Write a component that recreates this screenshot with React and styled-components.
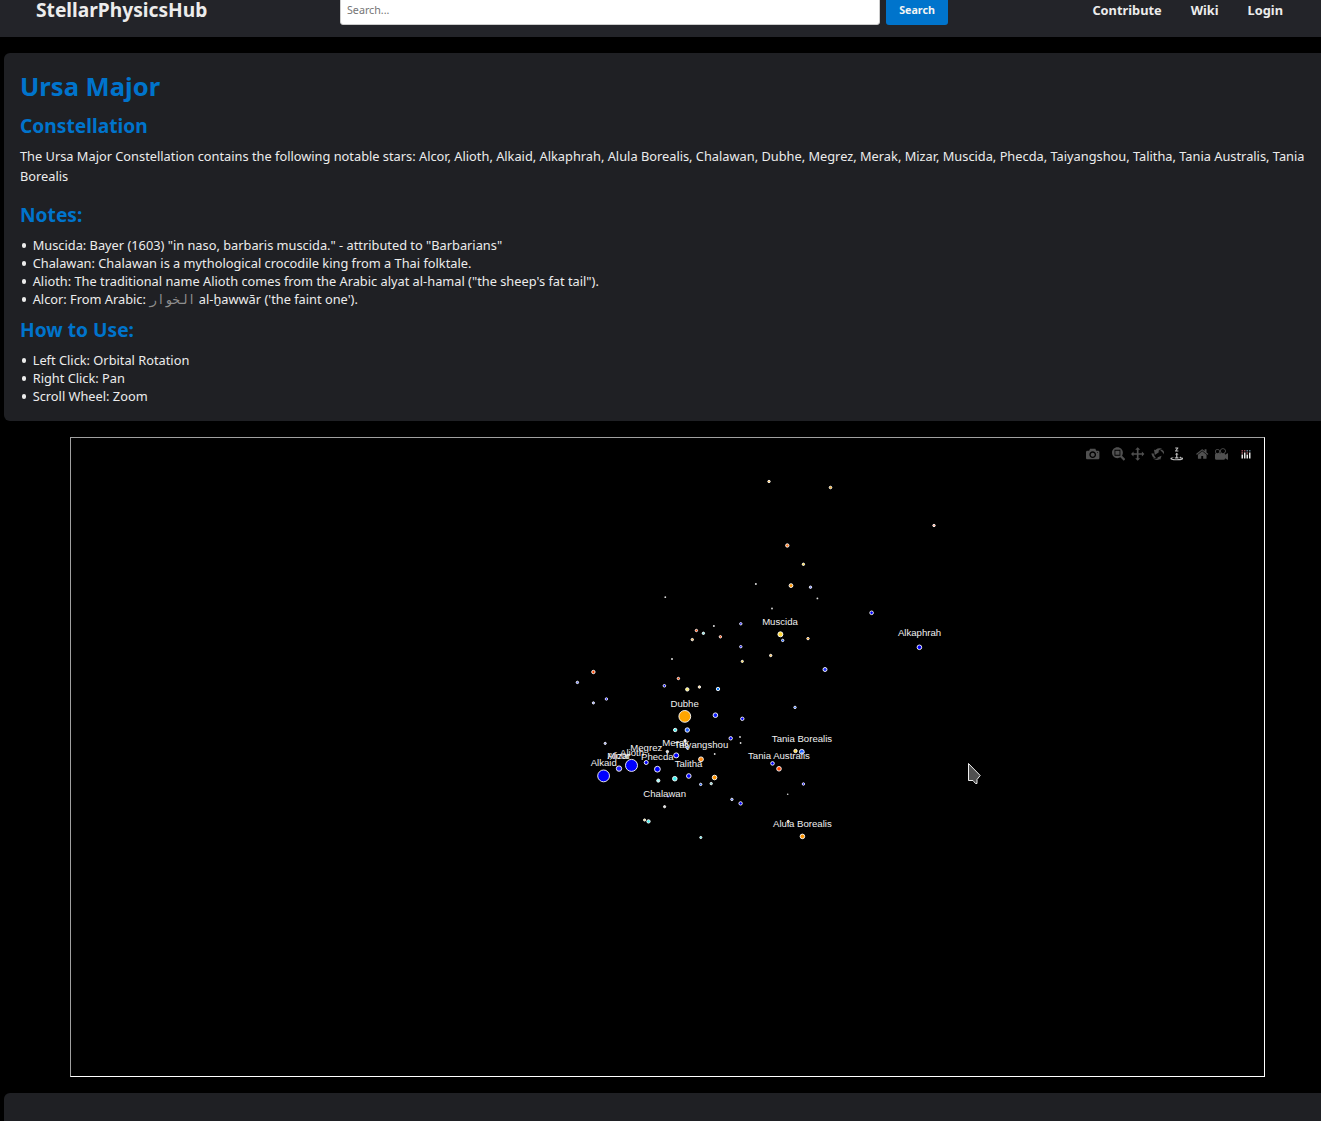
import React from "react";
import styled, { createGlobalStyle } from "styled-components";

const GlobalStyle = createGlobalStyle`
  * { box-sizing: border-box; }
  html, body { margin: 0; background: #000; }
  body {
    height: 1121px;
    overflow: hidden;
    color: #ececec;
    font-family: "Noto Sans", sans-serif;
    font-size: 12.8px;
  }
`;

const Page = styled.div`
  height: 1121px;
  overflow: hidden;
`;

const Header = styled.header`
  display: grid;
  grid-template-columns: 304px 608px 1fr;
  align-items: center;
  height: 54px;
  margin-top: -17px;
  padding: 0 38px 0 36px;
  background: #232429;
`;

const Brand = styled.div`
  font-size: 19.2px;
  font-weight: 700;
  line-height: 20px;
`;

const SearchForm = styled.form`
  display: flex;
  gap: 6px;
  margin: 0;
`;

const SearchInput = styled.input`
  width: 540px;
  height: 30px;
  padding: 0 6px;
  border: 1px solid #ccc;
  border-radius: 3px;
  background: #fff;
  font: 10.7px "Noto Sans", sans-serif;
  &::placeholder { color: #757575; }
`;

const SearchButton = styled.button`
  width: 62px;
  height: 30px;
  padding: 0;
  border: 0;
  border-radius: 3px;
  background: #0074cc;
  color: #f4f4f4;
  font: 700 10.7px "Noto Sans", sans-serif;
`;

const Nav = styled.nav`
  display: flex;
  justify-content: flex-end;
  gap: 29px;
  font-weight: 700;
`;

const Panel = styled.section`
  height: ${(p) => p.$height}px;
  margin: 16px 0 0 4px;
  padding: 16px 16px 0;
  border-radius: 6px 0 0 ${(p) => (p.$open ? 0 : 6)}px;
  background: #1f2024;
`;

const Title = styled.h1`
  margin: 0;
  color: #0074cc;
  font-size: 25.6px;
  line-height: 36px;
`;

const Heading = styled.h2`
  margin: ${(p) => p.$top}px 0 0;
  color: #0074cc;
  font-size: 19.2px;
  line-height: 26px;
`;

const Summary = styled.p`
  margin: 7px 0 0;
  line-height: 20px;
`;

const BulletList = styled.ul`
  margin: 8px 0 0;
  padding: 0;
  list-style: none;
  line-height: 18px;
`;

const Bullet = styled.li`
  display: flex;
  align-items: center;
  white-space: pre;
  height: 18px;
  &::before {
    content: "";
    width: 4.6px;
    height: 4.6px;
    margin: 1.4px 6.4px 0 1.7px;
    border-radius: 50%;
    background: #ececec;
  }
`;

const Arabic = styled.span`
  font-family: "DejaVu Sans Mono", monospace;
  font-size: 12.8px;
  line-height: 1;
  color: #8f8f8f;
`;

const Plot = styled.main`
  position: relative;
  width: 1195px;
  height: 640px;
  margin: 16px 0 0 70px;
  border: 1px solid #fff;
  border-top-color: #a0a0a0;
  border-left-color: #a0a0a0;
`;

const StarMap = styled.svg`
  display: block;
  width: 1193px;
  height: 638px;
`;

const StarLabel = styled.text`
  fill: #f0f0f0;
  font-family: "Liberation Sans", Arial, sans-serif;
  font-size: 9.6px;
  text-anchor: middle;
`;

const ModeBar = styled.div`
  position: absolute;
  top: 9px;
  right: 13.5px;
  display: flex;
`;

const IconGroup = styled.div`
  display: flex;
  gap: 6px;
  margin-left: 12.2px;
`;

const Icon = styled.svg`
  display: block;
  width: ${(p) => p.$width || 13.4}px;
  height: 14px;
  fill: ${(p) => (p.$active ? "#bfbfbf" : "#505050")};
`;

const Pointer = styled.svg`
  position: absolute;
  left: 896px;
  top: 324px;
  width: 16px;
  height: 23px;
`;

const icons = {
  camera: "m500 450c-83 0-150-67-150-150 0-83 67-150 150-150 83 0 150 67 150 150 0 83-67 150-150 150z m400 150h-120c-16 0-34 13-39 29l-31 93c-6 15-23 28-40 28h-340c-16 0-34-13-39-28l-31-94c-6-15-23-28-40-28h-120c-55 0-100-45-100-100v-450c0-55 45-100 100-100h800c55 0 100 45 100 100v450c0 55-45 100-100 100z m-400-550c-138 0-250 112-250 250 0 138 112 250 250 250 138 0 250-112 250-250 0-138-112-250-250-250z m365 380c-19 0-35 16-35 35 0 19 16 35 35 35 19 0 35-16 35-35 0-19-16-35-35-35z",
  zoom: "m1000-25l-250 251c40 63 63 138 63 218 0 224-182 406-407 406-224 0-406-182-406-406s183-406 407-406c80 0 155 22 218 62l250-250 125 125z m-812 250l0 438 437 0 0-438-437 0z m62 375l313 0 0-312-313 0 0 312z",
  pan: "m1000 350l-187 188 0-125-250 0 0 250 125 0-188 187-187-187 125 0 0-250-250 0 0 125-188-188 186-187 0 125 252 0 0-250-125 0 187-188 188 188-125 0 0 250 250 0 0-126 187 188z",
  orbit: "m922 660c-5 4-9 7-14 11-359 263-580-31-580-31l-102 28 58-400c0 1 1 1 2 2 118 108 351 249 351 249s-62 27-100 42c88 83 222 183 347 122 16-8 30-17 44-27-2 1-4 2-6 4z m36-329c0 0 64 229-88 296-62 27-124 14-175-11 157-78 225-208 249-266 8-19 11-31 11-31 2 5 6 15 11 32-5-13-8-20-8-20z m-775-239c70-31 117-50 198-32-121 80-199 346-199 346l-96-15-58-12c0 0 55-226 155-287z m603 133l-317-139c0 0 4-4 19-14 7-5 24-15 24-15s-177-147-389 4c235-287 536-112 536-112l31-22 100 299-4-1z m-298-153c6-4 14-9 24-15 0 0-17 10-24 15z",
  turntable: "m833 5l-17 108v41l-130-65 130-66c0 0 0 38 0 39 0-1 36-14 39-25 4-15-6-22-16-30-15-12-39-16-56-20-90-22-187-23-279-23-261 0-341 34-353 59 3 60 228 110 228 110-140-8-351-35-351-116 0-120 293-142 474-142 155 0 477 22 477 142 0 50-74 79-163 96z m-374 94c-58-5-99-21-99-40 0-24 65-43 144-43 79 0 143 19 143 43 0 19-42 34-98 40v216h87l-132 135-133-135h88v-216z m167 515h-136v1c16 16 31 34 46 52l84 109v54h-230v-71h124v-1c-16-17-28-32-44-51l-89-114v-51h245v72z",
  home: "m786 296v-267q0-15-11-26t-25-10h-214v214h-143v-214h-214q-15 0-25 10t-11 26v267q0 1 0 2t0 2l321 264 321-264q1-1 1-4z m124 39l-34-41q-5-5-12-6h-2q-7 0-12 3l-386 322-386-322q-7-4-13-4-7 2-12 7l-35 41q-4 5-3 13t6 12l401 334q18 15 42 15t43-15l136-114v109q0 8 5 13t13 5h107q8 0 13-5t5-13v-227l122-102q5-5 6-12t-4-13z",
  movie: "m938 413l-188-125c0 37-17 71-44 94 64 38 107 107 107 187 0 121-98 219-219 219-121 0-219-98-219-219 0-61 25-117 66-156h-115c30 33 49 76 49 125 0 103-84 187-187 187s-188-84-188-187c0-57 26-107 65-141-38-22-65-62-65-109v-250c0-70 56-126 125-126h500c69 0 125 56 125 126l188-126c34 0 62 28 62 63v375c0 35-28 63-62 63z m-750 0c-69 0-125 56-125 125s56 125 125 125 125-56 125-125-56-125-125-125z m406-1c-87 0-157 70-157 157 0 86 70 156 157 156s156-70 156-156-70-157-156-157z",
};

const B = "#0000ff", O = "#ff9500", R = "#ff4500", Y = "#ffd633", C = "#40f0f0", D = "#1e5cff", W = "#dddddd";

// x, y, radius, colour
const stars = [
  [769, 481.5, 1.5, "#ffc050"], [830.5, 487.5, 1.6, "#ffb020"], [934, 525.5, 1.5, "#ff9980"],
  [787.3, 545.5, 2, "#ff7a20"], [803.4, 564.3, 1.5, Y], [755.9, 584, 1, W], [791, 585.6, 2.2, O],
  [810.5, 587.2, 1.5, "#7080ff"], [817.4, 598.4, 0.9, W], [772, 608.5, 0.9, W], [871.6, 612.8, 2.1, B],
  [780.4, 634.3, 2.8, Y], [782.7, 640.4, 1.5, D], [808, 638.6, 1.5, O], [770.7, 655.5, 1.5, "#ffc050"],
  [825, 669.5, 2.3, "#2030ff"], [919.4, 647.3, 2.6, B], [665.3, 597.2, 0.9, W],
  [740.8, 623.8, 1.5, B], [740.8, 646.7, 1.5, B], [742.3, 661.4, 1.4, Y], [713.9, 625.9, 1, W],
  [696.4, 630.5, 1.5, R], [703.4, 633.3, 1.5, "#80e0e0"], [720.4, 636.8, 1.5, R], [692.3, 639.6, 1.5, "#ffb850"],
  [672, 659, 1, W], [593.4, 672, 2, R], [577.4, 682.4, 1.5, "#7080ff"], [606.4, 699, 1.5, B], [593.4, 702.9, 1.4, "#8090ff"],
  [678.4, 678.5, 1.5, R], [664.4, 685.8, 1.6, B], [687.3, 689.4, 2, "#fff066"], [699.4, 687, 1.5, "#ffd080"],
  [718, 689, 2, "#1080ff"], [684.8, 716.4, 6.2, "#ffa500"], [675.2, 730, 2, C], [687.3, 730, 2.5, D],
  [715.4, 715.2, 2.6, "#1020ff"], [742.3, 718.8, 2, B], [795, 707.4, 1.5, D], [605.2, 743.4, 1.4, "#90a0ff"],
  [730.7, 738.3, 2, B], [740, 737, 0.9, W], [740.6, 743, 0.9, W], [667.4, 751.6, 1.5, W],
  [685, 741, 1.5, W], [687, 747.5, 1.4, D], [676.2, 755.4, 2.8, B], [714.7, 754, 0.9, W],
  [603.6, 775.9, 6.2, B], [631.5, 765.4, 6.3, B], [619, 768.6, 3, "#2020ff"], [646.2, 762.5, 2.3, B],
  [657.4, 769.2, 3.2, B], [658.3, 780.6, 1.9, "#99ffff"], [674.8, 778.7, 2.6, C], [688.8, 776, 2.6, B],
  [701, 759.3, 2.7, "#ff8a10"], [700.7, 784.4, 1.5, D], [711.2, 783.6, 1.5, "#80d0d0"], [714.6, 777.5, 2.6, O],
  [668, 796.5, 1, "#8888ff"], [664.6, 806.7, 1.4, W], [644.6, 820, 1.4, "#ffe680"], [648.5, 821.4, 2, C],
  [700.8, 837.5, 1.4, C], [731.9, 799.4, 1.5, "#5070ff"], [740.6, 803.4, 2, B], [795.5, 751, 2, Y],
  [801.8, 751.8, 2.7, D], [772.5, 763.4, 2.1, B], [779, 768.8, 2.6, R], [803.4, 784, 1.5, B],
  [787.7, 794.2, 0.8, W], [788.2, 821.5, 1.4, O], [802.4, 836.4, 2.6, O],
];

const labels = [
  ["Muscida", 780, 624.7], ["Alkaphrah", 919.5, 635.7], ["Dubhe", 684.6, 706.7], ["Tania Borealis", 802, 742],
  ["Tania Australis", 779, 759], ["Alula Borealis", 802.4, 826.8], ["Chalawan", 664.7, 797],
  ["Alkaid", 603.7, 766], ["Mizar", 619, 759], ["Alcor", 618.5, 759], ["Alioth", 632, 756],
  ["Megrez", 646.3, 751], ["Phecda", 657.3, 759.8], ["Merak", 675.7, 745.8], ["Taiyangshou", 701.3, 747.7],
  ["Talitha", 688.6, 766.7],
];

const notes = [
  'Muscida: Bayer (1603) "in naso, barbaris muscida." - attributed to "Barbarians"',
  "Chalawan: Chalawan is a mythological crocodile king from a Thai folktale.",
  'Alioth: The traditional name Alioth comes from the Arabic alyat al-hamal ("the sheep\'s fat tail").',
];

const ModeIcon = ({ name, active }) => (
  <Icon viewBox="0 0 1000 1000" $active={active} aria-label={name}>
    <path transform="matrix(1 0 0 -1 0 850)" d={icons[name]} />
  </Icon>
);

const PlotlyMark = () => (
  <Icon viewBox="0 0 10 14" $width={10} aria-label="plotly">
    {[0.5, 3, 5.5, 8].map((x, i) => (
      <g key={x}>
        <rect x={x} y={i % 2 ? 5.5 : 7.5} width="1.5" height={i % 2 ? 6 : 4} fill="#e8e8e8" />
        <rect x={x} y="3" width="1.5" height="1.5" fill={i < 2 ? "#8a4550" : "#5d7888"} />
        {i % 2 === 0 && <rect x={x} y="5.2" width="1.5" height="1.5" fill="#9b5960" />}
      </g>
    ))}
  </Icon>
);

export default function App() {
  return (
    <Page>
      <GlobalStyle />
      <Header>
        <Brand>StellarPhysicsHub</Brand>
        <SearchForm>
          <SearchInput placeholder="Search..." />
          <SearchButton type="button">Search</SearchButton>
        </SearchForm>
        <Nav><span>Contribute</span><span>Wiki</span><span>Login</span></Nav>
      </Header>
      <Panel $height={368}>
        <Title>Ursa Major</Title>
        <Heading $top={8}>Constellation</Heading>
        <Summary>
          The Ursa Major Constellation contains the following notable stars: Alcor, Alioth, Alkaid, Alkaphrah, Alula Borealis, Chalawan, Dubhe, Megrez, Merak, Mizar, Muscida, Phecda, Taiyangshou, Talitha, Tania Australis, Tania Borealis
        </Summary>
        <Heading $top={16}>Notes:</Heading>
        <BulletList>
          {notes.map((n) => <Bullet key={n}>{n}</Bullet>)}
          <Bullet><span>Alcor: From Arabic: <Arabic>الخوار</Arabic> al-ḫawwār ('the faint one').</span></Bullet>
        </BulletList>
        <Heading $top={9}>How to Use:</Heading>
        <BulletList>
          <Bullet>Left Click: Orbital Rotation</Bullet>
          <Bullet>Right Click: Pan</Bullet>
          <Bullet>Scroll Wheel: Zoom</Bullet>
        </BulletList>
      </Panel>
      <Plot>
        <StarMap viewBox="71 438 1193 638">
          {stars.map(([x, y, r, c], i) => (
            <circle key={i} cx={x} cy={y} r={r > 1 ? r - 0.3 : r} fill={c} stroke="#fff" strokeWidth={r > 1 ? 0.9 : 0} />
          ))}
          {labels.map(([t, x, y]) => <StarLabel key={t} x={x} y={y}>{t}</StarLabel>)}
        </StarMap>
        <ModeBar>
          <IconGroup><ModeIcon name="camera" /></IconGroup>
          <IconGroup>
            <ModeIcon name="zoom" /><ModeIcon name="pan" /><ModeIcon name="orbit" /><ModeIcon name="turntable" active />
          </IconGroup>
          <IconGroup><ModeIcon name="home" /><ModeIcon name="movie" /></IconGroup>
          <IconGroup><PlotlyMark /></IconGroup>
        </ModeBar>
        <Pointer viewBox="0 0 16 23">
          <path d="M1.5 1.5V18.5H6L8.5 21.5H10V17.5L13.2 13.5Z" fill="#505050" stroke="#eee" strokeWidth="1" />
        </Pointer>
      </Plot>
      <Panel $height={60} $open />
    </Page>
  );
}
